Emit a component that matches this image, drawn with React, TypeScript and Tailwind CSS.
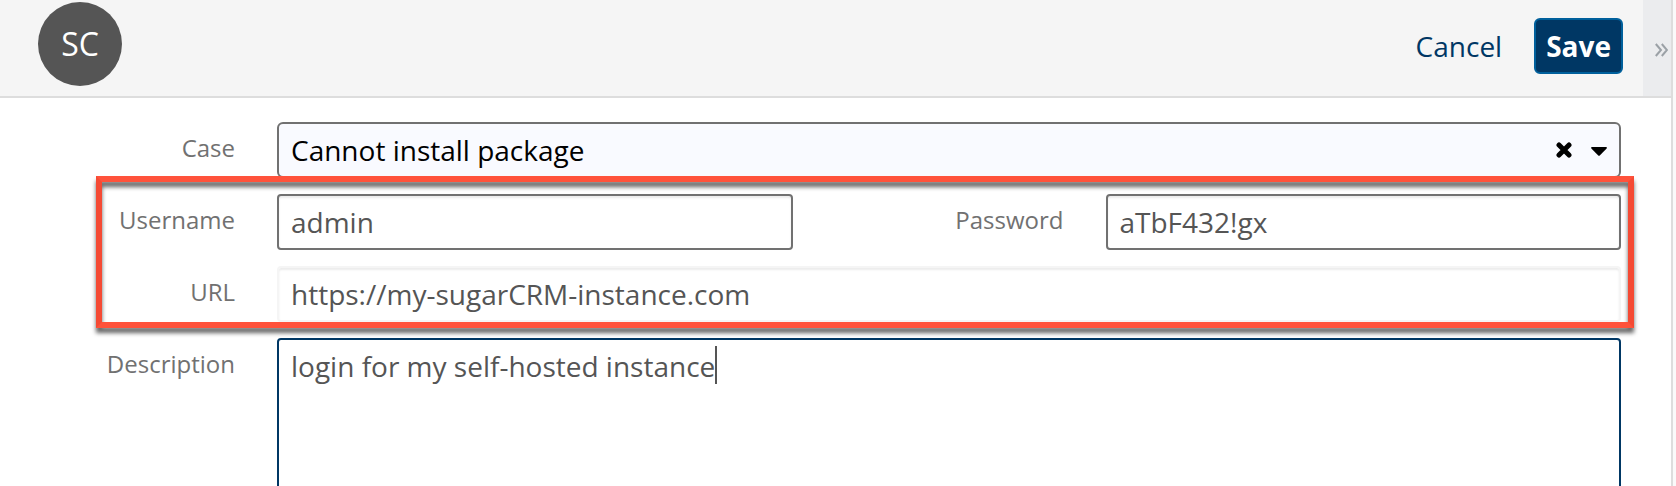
import { useState } from 'react';
import type { ReactNode } from 'react';

const caseOptions = ['Cannot install package', 'Cannot log in', 'Upgrade question'];

const fieldClass =
  'h-14 min-w-0 flex-1 rounded border-2 border-[#717171] bg-white px-3 text-[28px] text-[#555555] shadow-[inset_0_2px_2px_rgba(0,0,0,0.08)] outline-none';

function FieldLabel({ htmlFor, wide, children }: { htmlFor: string; wide?: boolean; children: ReactNode }) {
  return (
    <label
      htmlFor={htmlFor}
      className={`${wide ? 'w-[313px]' : 'w-[277px]'} h-14 shrink-0 pr-[42px] text-right text-2xl leading-[52px] text-[#717171]`}
    >
      {children}
    </label>
  );
}

function CloseIcon() {
  return (
    <svg width="16" height="16" viewBox="0 0 16 16" aria-hidden="true">
      <path d="M3 3 L13 13 M13 3 L3 13" stroke="#000" strokeWidth="5" strokeLinecap="round" />
    </svg>
  );
}

function CaretDownIcon() {
  return (
    <svg width="16" height="9" viewBox="0 0 16 9" aria-hidden="true">
      <path d="M0.8 0 H15.2 Q16.4 0.6 15.4 1.7 L9 8.3 Q8 9.3 7 8.3 L0.6 1.7 Q-0.4 0.6 0.8 0 Z" fill="#000" />
    </svg>
  );
}

function ExpandIcon() {
  return (
    <svg width="13" height="14" viewBox="0 0 13 14" fill="none" stroke="#9ba1a6" strokeWidth="2" aria-hidden="true">
      <path d="M0.8 1 L6 7 L0.8 13 M6.8 1 L12 7 L6.8 13" />
    </svg>
  );
}

export default function App() {
  const [caseName, setCaseName] = useState(caseOptions[0]);
  const [username, setUsername] = useState('admin');
  const [password, setPassword] = useState('aTbF432!gx');
  const [url, setUrl] = useState('https://my-sugarCRM-instance.com');
  const [description, setDescription] = useState('login for my self-hosted instance');

  return (
    <div className="flex h-screen overflow-hidden bg-[#fafafa] pr-[3px] font-['Open_Sans',sans-serif]">
      <div className="flex min-w-0 flex-1 flex-col border-r-2 border-[#dddddd] bg-white">
        {/* Header */}
        <header className="flex h-[98px] shrink-0 border-b-2 border-[#dddddd] bg-[#f5f5f5]">
          <div className="flex flex-1 items-start justify-between pr-5 pl-[38px]">
            <div className="mt-0.5 flex size-[84px] items-center justify-center rounded-full bg-[#555555] pb-px text-[32px] font-medium text-white">
              SC
            </div>
            <div className="mt-[18px] flex items-center gap-8">
              <button type="button" className="text-[28px] text-[#003764]">
                Cancel
              </button>
              <button
                type="submit"
                form="record"
                className="h-14 rounded-md border-2 border-[#00609c] bg-[#003764] px-2.5 text-[28px] leading-none font-bold text-white"
              >
                Save
              </button>
            </div>
          </div>
          <button type="button" aria-label="Toggle side panel" className="flex w-7 items-center justify-center bg-[#ebecee] pt-1 pl-2">
            <ExpandIcon />
          </button>
        </header>

        {/* Record form */}
        <form id="record" className="flex flex-1 flex-col gap-4 pt-6 pr-[50px]" onSubmit={(e) => e.preventDefault()}>
          <div className="flex">
            <FieldLabel htmlFor="case">Case</FieldLabel>
            <div className="relative flex min-w-0 flex-1">
              <select
                id="case"
                value={caseName}
                onChange={(e) => setCaseName(e.target.value)}
                className="h-14 min-w-0 flex-1 appearance-none rounded-md border-2 border-[#717171] bg-[#f9faff] px-3 text-[28px] text-black outline-none"
              >
                <option value="" />
                {caseOptions.map((option) => (
                  <option key={option}>{option}</option>
                ))}
              </select>
              <button
                type="button"
                aria-label="Clear case"
                className="absolute top-5 right-[49px]"
                onClick={() => setCaseName('')}
              >
                <CloseIcon />
              </button>
              <span className="pointer-events-none absolute top-[25px] right-[14px]">
                <CaretDownIcon />
              </span>
            </div>
          </div>

          <div className="relative flex flex-col gap-4">
            <div className="flex">
              <FieldLabel htmlFor="username">Username</FieldLabel>
              <input id="username" type="text" value={username} onChange={(e) => setUsername(e.target.value)} className={fieldClass} />
              <FieldLabel htmlFor="password" wide>
                Password
              </FieldLabel>
              <input id="password" type="text" value={password} onChange={(e) => setPassword(e.target.value)} className={fieldClass} />
            </div>
            <div className="flex">
              <FieldLabel htmlFor="url">URL</FieldLabel>
              <input
                id="url"
                type="text"
                value={url}
                onChange={(e) => setUrl(e.target.value)}
                className="h-14 min-w-0 flex-1 rounded border-2 border-[#f5f5f5] bg-white px-3 text-[28px] text-[#555555] shadow-[inset_0_2px_2px_rgba(0,0,0,0.08)] outline-none"
              />
            </div>
            {/* Highlight around the credentials */}
            <div className="pointer-events-none absolute -top-[18px] -right-[13px] -bottom-1.5 left-24 border-6 border-x-[#f54a34] border-y-[#ff523b] drop-shadow-[0_5px_2px_rgba(0,0,0,0.6)]" />
          </div>

          <div className="flex flex-1">
            <FieldLabel htmlFor="description">Description</FieldLabel>
            <div className="relative flex min-w-0 flex-1">
              <textarea
                id="description"
                value={description}
                onChange={(e) => setDescription(e.target.value)}
                className="-mb-5 min-w-0 flex-1 resize-none rounded border-2 border-[#003764] bg-white px-3 py-1.5 text-[28px] leading-10 text-[#555555] caret-transparent outline-none"
              />
              <span className="pointer-events-none absolute top-2 left-[438px] h-[38px] w-0.5 bg-[#555555]" />
            </div>
          </div>
        </form>
      </div>
    </div>
  );
}
